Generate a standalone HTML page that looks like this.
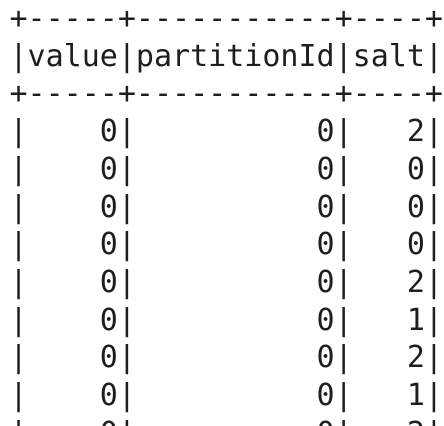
<!DOCTYPE html>
<html><head><meta charset="utf-8"><style>
html,body{margin:0;padding:0;background:#fff;width:444px;height:426px;overflow:hidden}
pre{margin:0;padding:0 0 0 9.5px;font-family:"DejaVu Sans Mono","Liberation Mono",monospace;font-size:30px;line-height:37.7px;color:#1e1e1e;white-space:pre}
</style></head><body><pre>+-----+-----------+----+
|value|partitionId|salt|
+-----+-----------+----+
|    0|          0|   2|
|    0|          0|   0|
|    0|          0|   0|
|    0|          0|   0|
|    0|          0|   2|
|    0|          0|   1|
|    0|          0|   2|
|    0|          0|   1|
|    0|          0|   2|</pre></body></html>
